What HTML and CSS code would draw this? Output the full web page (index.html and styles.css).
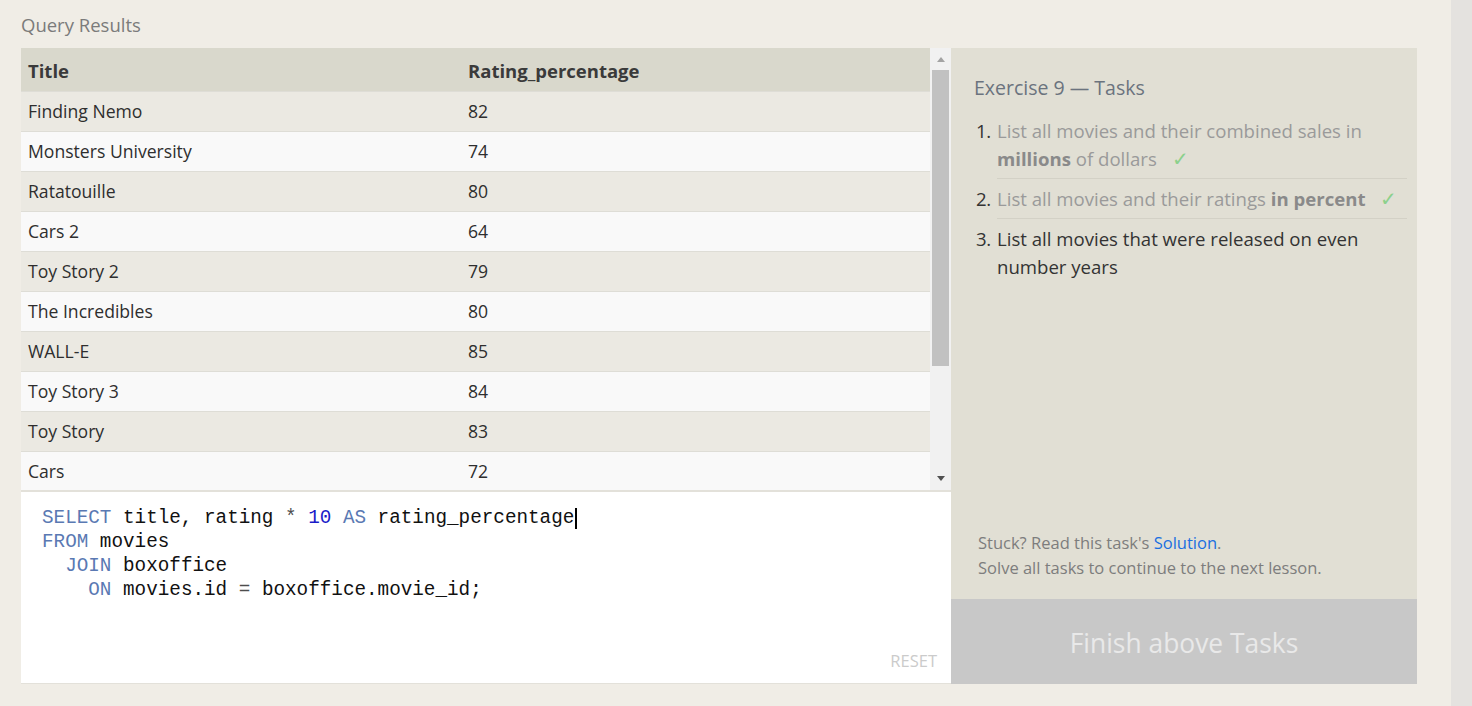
FILE: index.html
```html
<!DOCTYPE html>
<html>
<head>
<meta charset="utf-8">
<link rel="stylesheet" href="styles.css">
</head>
<body>
<div class="page">
  <main class="main">
    <div class="label">Query Results</div>
    <div class="work">
      <section class="left">
        <div class="results">
          <div class="table-view">
            <table class="grid">
              <thead>
                <tr><th class="c1">Title</th><th>Rating_percentage</th></tr>
              </thead>
              <tbody>
                <tr><td>Finding Nemo</td><td>82</td></tr>
                <tr><td>Monsters University</td><td>74</td></tr>
                <tr><td>Ratatouille</td><td>80</td></tr>
                <tr><td>Cars 2</td><td>64</td></tr>
                <tr><td>Toy Story 2</td><td>79</td></tr>
                <tr><td>The Incredibles</td><td>80</td></tr>
                <tr><td>WALL-E</td><td>85</td></tr>
                <tr><td>Toy Story 3</td><td>84</td></tr>
                <tr><td>Toy Story</td><td>83</td></tr>
                <tr><td>Cars</td><td>72</td></tr>
              </tbody>
            </table>
          </div>
          <div class="scrollbar">
            <div class="arrow up"></div>
            <div class="track"><div class="thumb"></div></div>
            <div class="arrow down"></div>
          </div>
        </div>
        <div class="editor">
          <div class="code">
            <div class="line"><span class="kw">SELECT</span> title, rating <span class="op">*</span> <span class="num">10</span> <span class="kw">AS</span> rating_percentage<span class="cursor"></span></div>
            <div class="line"><span class="kw">FROM</span> movies</div>
            <div class="line">  <span class="kw">JOIN</span> boxoffice</div>
            <div class="line">    <span class="kw">ON</span> movies.id <span class="op">=</span> boxoffice.movie_id;</div>
          </div>
          <div class="reset">RESET</div>
        </div>
      </section>
      <aside class="right">
        <div class="tasks">
          <h2 class="title">Exercise 9 — Tasks</h2>
          <ol class="list">
            <li class="done"><span class="n">1.</span><span class="t">List all movies and their combined sales in <b>millions</b> of dollars <span class="check">✓</span></span></li>
            <li class="done"><span class="n">2.</span><span class="t">List all movies and their ratings <b>in percent</b> <span class="check">✓</span></span></li>
            <li class="todo"><span class="n">3.</span><span class="t">List all movies that were released on even number years</span></li>
          </ol>
          <div class="help">
            <p>Stuck? Read this task's <a class="link">Solution</a>.</p>
            <p>Solve all tasks to continue to the next lesson.</p>
          </div>
        </div>
        <div class="finish">Finish above Tasks</div>
      </aside>
    </div>
  </main>
  <div class="strip"></div>
</div>
</body>
</html>
```
FILE: styles.css
```css
* { box-sizing: border-box; }
html, body { margin: 0; padding: 0; }
body {
  background: #f0ede6;
  font-family: "Open Sans", "Noto Sans", sans-serif;
  color: #333;
  height: 706px;
  overflow: hidden;
}
.page { display: flex; height: 706px; }
.main { width: 1451px; padding-left: 21px; }
.strip { width: 21px; background: #e4e2df; }

.label {
  height: 48px;
  padding-top: 13px;
  font-size: 18.5px;
  line-height: 24px;
  color: #7b7b7b;
}
.work { display: flex; width: 1396px; height: 636px; }

.left { width: 930px; display: flex; flex-direction: column; }
.results { display: flex; height: 444px; border-bottom: 2px solid #e3e1da; }
.table-view { width: 909px; overflow: hidden; }
.grid { width: 100%; border-collapse: collapse; font-size: 17.6px; }
.grid th {
  background: #d9d8cc;
  text-align: left;
  font-weight: 700;
  height: 43px;
  padding: 3px 7px 0;
  color: #3a3a3a;
  font-size: 18.5px;
}
.grid th.c1 { width: 440px; }
.grid td {
  height: 40px;
  padding: 0 7px;
  border-top: 1px solid #deddd6;
  color: #2e2e2e;
}
.grid tbody tr:nth-child(odd) td { background: #ebe9e2; }
.grid tbody tr:nth-child(even) td { background: #f9f9f9; }

.scrollbar {
  width: 21px;
  background: #f1f1f1;
  display: flex;
  flex-direction: column;
  align-items: center;
}
.arrow { width: 0; height: 0; border-left: 4px solid transparent; border-right: 4px solid transparent; }
.arrow.up { border-bottom: 5px solid #a3a3a3; margin: 9px 0 8px; }
.arrow.down { border-top: 5px solid #505050; margin: 8px 0 9px; }
.track { flex: 1; width: 100%; display: flex; justify-content: center; }
.thumb { width: 17px; height: 296px; background: #c1c1c1; }

.editor {
  flex: 1;
  background: #fff;
  border-bottom: 1px solid #e3e1da;
  display: flex;
  flex-direction: column;
  justify-content: space-between;
  padding: 14px 14px 12px 21px;
}
.code {
  font-family: "Liberation Mono", "DejaVu Sans Mono", monospace;
  font-size: 19.3px;
  line-height: 24px;
  color: #111;
}
.line { white-space: pre; height: 24px; }
.kw { color: #5a79b3; }
.num { color: #1a1ac8; }
.op { color: #4d4d4d; }
.cursor {
  display: inline-block;
  width: 2px;
  height: 21px;
  background: #000;
  vertical-align: top;
  margin-top: 2px;
  margin-left: 1px;
}
.reset {
  align-self: flex-end;
  font-size: 16.5px;
  line-height: 20px;
  color: #cbcbcb;
}

.right { width: 466px; display: flex; flex-direction: column; }
.tasks {
  flex: 1;
  background: #e1dfd4;
  padding: 27px 10px 19px 23px;
  display: flex;
  flex-direction: column;
}
.title {
  margin: 0;
  font-weight: 400;
  font-size: 19.5px;
  line-height: 26px;
  color: #6b737e;
}
.list { list-style: none; margin: 10px 0 0; padding: 0; }
.list li {
  display: flex;
  padding: 6px 0 5px;
  font-size: 18.6px;
  line-height: 28px;
}
.list li .n { width: 23px; flex: none; color: #333; padding-left: 2px; letter-spacing: -0.5px; }
.list li .t { flex: 1; border-bottom: 1px solid #d3d1c6; padding-bottom: 5px; margin-bottom: -5px; }
.list li.todo .t { border-bottom: none; color: #333; }
.list li.done .t { color: #9a9a9a; }
.list li.done b { color: #8a8a8a; }
.check { color: #8cd18c; margin-left: 10px; font-size: 20px; }
.help { margin-top: auto; padding-left: 4px; font-size: 16.5px; line-height: 25px; color: #7d7d7d; }
.help p { margin: 0; }
.link { color: #1a6fe0; }

.finish {
  height: 85px;
  background: #c8c8c8;
  color: #e9e9e9;
  font-size: 26.4px;
  display: flex;
  align-items: center;
  justify-content: center;
  padding-top: 3px;
}
```
